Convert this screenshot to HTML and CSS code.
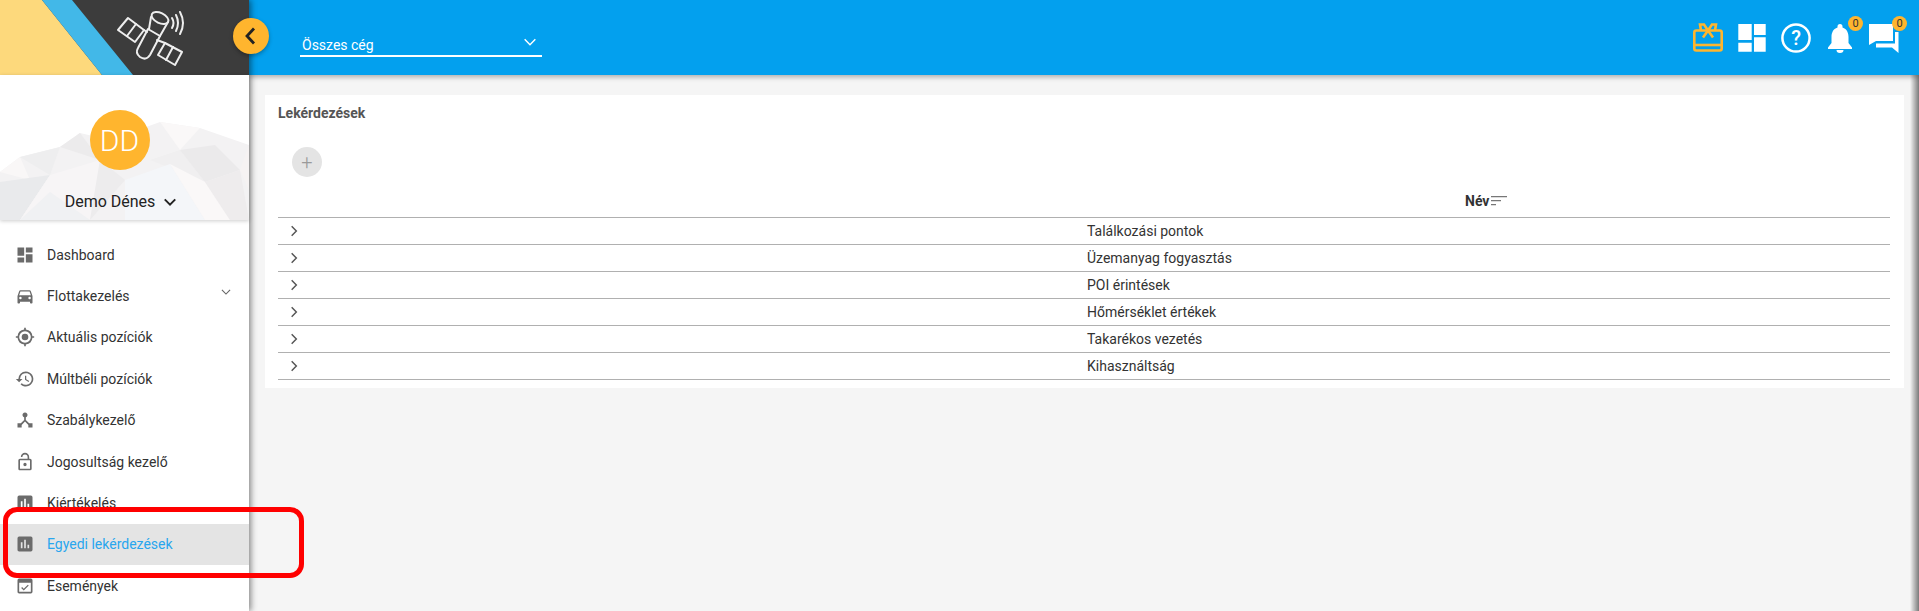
FILE: index.html

```html
<!DOCTYPE html>
<html lang="hu">
<head>
  <meta charset="UTF-8">
  <title>Egyedi lekérdezések</title>
  <link rel="stylesheet" href="styles.css">
</head>
<body>

  <div class="app">
    <aside class="sidebar">
      <div class="logo">
        <svg class="logo-art" viewBox="0 0 249 75" width="249" height="75">
          <rect width="249" height="75" fill="#3c3c3c"/>
          <polygon points="0,0 42,0 102,75 0,75" fill="#fdd97c"/>
          <polygon points="42,0 72,0 133,75 102,75" fill="#42b8e8"/>
          <g fill="none" stroke="#eee" stroke-width="2" stroke-linejoin="round" stroke-linecap="round">
            <path d="M128 18 L118 30 L135 42 L144 30Z"/>
            <path d="M136 24 L127 36"/>
            <path d="M144 30 L147 32"/>
            <path d="M148 29 L160 36 L150 55 Q146 61 140 57 Q135 53 138 48Z"/>
            <ellipse cx="160" cy="18" rx="9" ry="5" transform="rotate(25 160 18)"/>
            <path d="M151 17 L149 29 M168 22 L160 36"/>
            <path d="M157 40 L165 43"/>
            <path d="M165 43 L158 55 L175 65 L182 52Z"/>
            <path d="M173 47 L166 60"/>
            <path d="M172 18 Q175 23 172 28 M176 15 Q180 23 176 31 M180 12 Q186 23 180 34"/>
          </g>
        </svg>
        <button class="collapse">
          <svg viewBox="0 0 24 24" width="24" height="24"><path d="M15 4.5 8 12l7 7.5" fill="none" stroke="#222" stroke-width="2.8"/></svg>
        </button>
      </div>

      <div class="profile">
        <svg class="mountains" viewBox="0 0 249 100" preserveAspectRatio="none">
          <polygon points="0,52 20,37 60,27 80,13 110,20 160,2 200,8 249,25 249,100 0,100" fill="#f3f2f3"/>
          <polygon points="0,52 20,37 30,60" fill="#f9f7f7"/>
          <polygon points="20,37 60,27 50,55" fill="#eeeeef"/>
          <polygon points="60,27 80,13 100,40" fill="#ecebec"/>
          <polygon points="0,62 50,55 20,100 0,100" fill="#e9eaec"/>
          <polygon points="50,55 100,40 90,100 20,100" fill="#f7f5f6"/>
          <polygon points="20,100 50,72 90,100" fill="#f0f1f3"/>
          <polygon points="100,40 125,60 90,100" fill="#edeced"/>
          <polygon points="160,2 200,8 180,30" fill="#faf8f8"/>
          <polygon points="150,40 180,30 205,62" fill="#f0eff0"/>
          <polygon points="180,30 215,25 240,50 205,62" fill="#ebeaeb"/>
          <polygon points="125,60 170,44 205,100 125,100" fill="#f4f6f9"/>
          <polygon points="170,44 205,62 230,100 205,100" fill="#faf8f8"/>
          <polygon points="205,62 240,50 249,100 230,100" fill="#eeeced"/>
          <polygon points="240,50 249,25 249,70" fill="#f6f3f3"/>
        </svg>
        <div class="avatar">DD</div>
        <div class="user">Demo Dénes
          <svg viewBox="0 0 24 24" width="18" height="18"><path d="M5 8.500l7 7 7-7" fill="none" stroke="#222" stroke-width="2.6"/></svg>
        </div>
      </div>

      <nav class="menu">
        <a class="item">
          <svg class="ico" viewBox="0 0 24 24"><path d="M3 13h8V3H3zm0 8h8v-6H3zm10 0h8V11h-8zm0-18v6h8V3z"/></svg>
          Dashboard
        </a>
        <a class="item item-more">
          <svg class="ico" viewBox="0 0 24 24"><path d="M18.900 6c-.2-.6-.8-1-1.400-1h-11c-.7 0-1.200.4-1.400 1L3 12v8c0 .6.400 1 1 1h1c.6 0 1-.4 1-1v-1h12v1c0 .6.400 1 1 1h1c.6 0 1-.4 1-1v-8zM6.500 16a1.500 1.500 0 1 1 0-3 1.500 1.500 0 0 1 0 3zm11 0a1.500 1.500 0 1 1 0-3 1.500 1.500 0 0 1 0 3zM5 11l1.500-4.500h11L19 11z"/></svg>
          Flottakezelés
          <svg class="more" viewBox="0 0 24 24"><path d="M5 8.500l7 7 7-7" fill="none" stroke="#666" stroke-width="2"/></svg>
        </a>
        <a class="item">
          <svg class="ico" viewBox="0 0 24 24"><path d="M12 8a4 4 0 1 0 0 8 4 4 0 0 0 0-8zm8.940 3A9 9 0 0 0 13 3.060V1h-2v2.060A9 9 0 0 0 3.060 11H1v2h2.060A9 9 0 0 0 11 20.940V23h2v-2.060A9 9 0 0 0 20.940 13H23v-2zM12 19a7 7 0 1 1 0-14 7 7 0 0 1 0 14z"/></svg>
          Aktuális pozíciók
        </a>
        <a class="item">
          <svg class="ico" viewBox="0 0 24 24"><path d="M13 3a9 9 0 0 0-9 9H1l3.900 3.900L9 12H6a7 7 0 1 1 2.050 4.950L6.640 18.360A9 9 0 1 0 13 3zm-1 5v5l4.300 2.500.7-1.200-3.500-2.100V8z"/></svg>
          Múltbéli pozíciók
        </a>
        <a class="item">
          <svg class="ico" viewBox="0 0 24 24"><path d="M17 16l-4-4V8.800a3 3 0 1 0-2 0V12l-4 4H3v5h5v-3.100l4-4.200 4 4.200V21h5v-5z"/></svg>
          Szabálykezelő
        </a>
        <a class="item">
          <svg class="ico" viewBox="0 0 24 24"><path d="M12 17a2 2 0 1 0 0-4 2 2 0 0 0 0 4zm6-9h-1V6a5 5 0 0 0-10 0h1.900a3.100 3.100 0 0 1 6.200 0v2H6a2 2 0 0 0-2 2v10c0 1.100.9 2 2 2h12a2 2 0 0 0 2-2V10a2 2 0 0 0-2-2zm0 12H6V10h12z"/></svg>
          Jogosultság kezelő
        </a>
        <a class="item">
          <svg class="ico" viewBox="0 0 24 24"><path d="M19 3H5a2 2 0 0 0-2 2v14c0 1.100.9 2 2 2h14a2 2 0 0 0 2-2V5a2 2 0 0 0-2-2zM9 17H7v-7h2zm4 0h-2V7h2zm4 0h-2v-4h2z"/></svg>
          Kiértékelés
        </a>
        <a class="item active">
          <svg class="ico" viewBox="0 0 24 24"><path d="M19 3H5a2 2 0 0 0-2 2v14c0 1.100.9 2 2 2h14a2 2 0 0 0 2-2V5a2 2 0 0 0-2-2zM9 17H7v-7h2zm4 0h-2V7h2zm4 0h-2v-4h2z"/></svg>
          Egyedi lekérdezések
        </a>
        <a class="item">
          <svg class="ico" viewBox="0 0 24 24"><path d="M16.500 11.500 15.400 10.400l-4.900 4.900-2-2-1.100 1.100 3.100 3.100zM19 3H5a2 2 0 0 0-2 2v14c0 1.100.9 2 2 2h14a2 2 0 0 0 2-2V5a2 2 0 0 0-2-2zm0 16H5V8h14z"/></svg>
          Események
        </a>
      </nav>
    </aside>

    <div class="main">
      <header class="topbar">
        <div class="company">
          <span>Összes cég</span>
          <svg viewBox="0 0 24 24" width="16" height="16"><path d="M4 8l8 8 8-8" fill="none" stroke="#fff" stroke-width="2.200"/></svg>
        </div>
        <div class="tools">
          <svg class="tool" viewBox="0 0 30 30" fill="none" stroke="#ffb52e" stroke-width="2.600">
            <rect x="1.300" y="7.500" width="27.400" height="20" rx="2"/>
            <path d="M1 22h28"/>
            <path d="M15 7.500 11 1.500H7L8 7.500M15 7.500l4-6h4L22 7.500M15 7.500l-5 7M15 7.500l5 7"/>
          </svg>
          <svg class="tool" viewBox="0 0 30 30" fill="#fff"><path d="M1.300 1h13.400v16H1.300zM1.300 19.700h13.400v9H1.300zM17 1h11.700v11H17zM17 14.300h11.700v14.400H17z"/></svg>
          <svg class="tool" viewBox="0 0 30 30"><circle cx="15" cy="15" r="13.600" fill="none" stroke="#fff" stroke-width="2.500"/><text x="15" y="22" class="qmark">?</text></svg>
          <div class="tool-badge">
            <svg class="tool" viewBox="0 0 30 30" fill="#fff"><path d="M15 1a2.500 2.500 0 0 0-2.500 2.500v1C8 6 6.500 10 6.500 14v6L3 24.500V26h24v-1.500L23.500 20v-6c0-4-1.500-8-6-9.500v-1A2.500 2.500 0 0 0 15 1zM11.500 27a3.500 3 0 0 0 7 0z"/></svg>
            <span class="badge">0</span>
          </div>
          <div class="tool-badge">
            <svg class="tool" viewBox="0 0 30 30" fill="#fff"><path d="M0 1h24v17H7l-7 4zM26 9h3.500v21L23 24.500H7v-4h19z"/></svg>
            <span class="badge">0</span>
          </div>
        </div>
      </header>

      <main class="content">
        <section class="card">
          <h2>Lekérdezések</h2>
          <button class="add">+</button>
          <div class="table-head">
            <span class="th-spacer"></span>
            <span class="th">Név
              <svg viewBox="0 0 16 10" width="16" height="10"><path d="M0 .7h16M0 4.700h10M0 8.700h5" stroke="#777" stroke-width="1.200" fill="none"/></svg>
            </span>
          </div>
          <div class="row"><svg class="chev" viewBox="0 0 24 24"><path d="M8 4l8 8-8 8"/></svg><span>Találkozási pontok</span></div>
          <div class="row"><svg class="chev" viewBox="0 0 24 24"><path d="M8 4l8 8-8 8"/></svg><span>Üzemanyag fogyasztás</span></div>
          <div class="row"><svg class="chev" viewBox="0 0 24 24"><path d="M8 4l8 8-8 8"/></svg><span>POI érintések</span></div>
          <div class="row"><svg class="chev" viewBox="0 0 24 24"><path d="M8 4l8 8-8 8"/></svg><span>Hőmérséklet értékek</span></div>
          <div class="row"><svg class="chev" viewBox="0 0 24 24"><path d="M8 4l8 8-8 8"/></svg><span>Takarékos vezetés</span></div>
          <div class="row"><svg class="chev" viewBox="0 0 24 24"><path d="M8 4l8 8-8 8"/></svg><span>Kihasználtság</span></div>
        </section>
      </main>
    </div>
  </div>

  <div class="marker"></div>

</body>
</html>
```

FILE: styles.css

```css
html, body { margin: 0; height: 611px; overflow: hidden; }
body { font-family: Roboto, "Liberation Sans", sans-serif; color: #333; background: #f5f5f5; }

.app { display: flex; height: 611px; }

/* sidebar */
.sidebar { width: 249px; flex: none; background: #fff; box-shadow: 2px 0 6px rgba(0,0,0,.45); z-index: 2; display: flex; flex-direction: column; }
.logo { height: 75px; position: relative; }
.logo-art { display: block; }
.collapse { position: absolute; right: -20px; top: 18px; width: 36px; height: 36px; padding: 0; border: 0; border-radius: 50%; background: #ffb52e; display: flex; align-items: center; justify-content: center; box-shadow: 0 2px 4px rgba(0,0,0,.3); }

.profile { height: 145px; padding-right: 10px; box-sizing: border-box; position: relative; box-shadow: 0 1px 4px rgba(0,0,0,.2); display: flex; flex-direction: column; align-items: center; }
.mountains { position: absolute; left: 0; bottom: 0; width: 100%; height: 100px; }
.avatar { position: relative; margin-top: 35px; width: 60px; height: 60px; border-radius: 50%; background: #ffb52e; color: #fff; font-size: 30px; font-weight: 300; display: flex; align-items: center; justify-content: center; }
.user { position: relative; margin: 22px 0 0 5px; font-size: 16px; color: #222; display: flex; align-items: center; gap: 6px; }

.menu { display: flex; flex-direction: column; padding-top: 14px; }
.item { height: 41.4px; display: flex; align-items: center; font-size: 14px; color: #333; padding-left: 15px; position: relative; flex: none; }
.item.active { background: #e4e4e4; color: #29a6ee; }
.ico { width: 20px; height: 20px; fill: #6b6b6b; margin-right: 12px; flex: none; }
.more { position: absolute; right: 16px; top: 10px; width: 14px; height: 14px; }

/* top bar */
.main { flex: 1; min-width: 0; display: flex; flex-direction: column; }
.topbar { height: 75px; flex: none; background: #03a0ee; box-shadow: 0 2px 5px rgba(0,0,0,.3); display: flex; justify-content: space-between; z-index: 1; }
.company { margin: 28px 0 0 51px; width: 242px; height: 29px; border-bottom: 2px solid #fff; color: #fff; font-size: 14px; display: flex; justify-content: space-between; align-items: flex-start; padding: 9px 2px 0; box-sizing: border-box; }
.company svg { margin: -3px 2px 0 0; }
.tools { display: flex; align-items: center; gap: 14px; padding-right: 20px; }
.tool { width: 30px; height: 30px; display: block; }
.qmark { font: 500 20px Roboto, sans-serif; fill: #fff; text-anchor: middle; }
.tool-badge { position: relative; }
.badge { position: absolute; right: -8px; top: -7px; width: 15px; height: 15px; border-radius: 50%; background: #ffb52e; color: #333; font-size: 11px; display: flex; align-items: center; justify-content: center; }

/* content */
.content { flex: 1; padding: 20px 15px 0 16px; background: linear-gradient(to left, rgba(0,0,0,.5), rgba(0,0,0,0) 9px); }
.card { background: #fff; padding: 9px 14px 8px 13px; }
.card h2 { margin: 0; font-size: 14px; font-weight: 700; color: #555; line-height: 18px; }
.add { display: block; margin: 25px 0 0 14px; width: 30px; height: 30px; border: 0; border-radius: 50%; background: #e4e4e4; color: #9a9a9a; font: 300 20px/30px Roboto, sans-serif; padding: 0; }
.table-head { display: flex; height: 41px; align-items: flex-end; padding-bottom: 8px; border-bottom: 1px solid #b0b0b0; box-sizing: border-box; }
.th-spacer { width: 1187px; flex: none; }
.th { font-size: 14px; font-weight: 700; color: #333; display: flex; align-items: center; gap: 2px; }
.row { height: 27px; box-sizing: border-box; padding-bottom: 1px; display: flex; align-items: center; border-bottom: 1px solid #b0b0b0; font-size: 14px; color: #333; }
.row span { margin-left: 786px; }
.chev { width: 14px; height: 14px; margin-left: 9px; flex: none; fill: none; stroke: #555; stroke-width: 2.5; }

/* red highlight drawn over the screenshot */
.marker { position: absolute; left: 3px; top: 507px; width: 291px; height: 61px; border: 5px solid #f00; border-radius: 14px; z-index: 5; pointer-events: none; }
```
